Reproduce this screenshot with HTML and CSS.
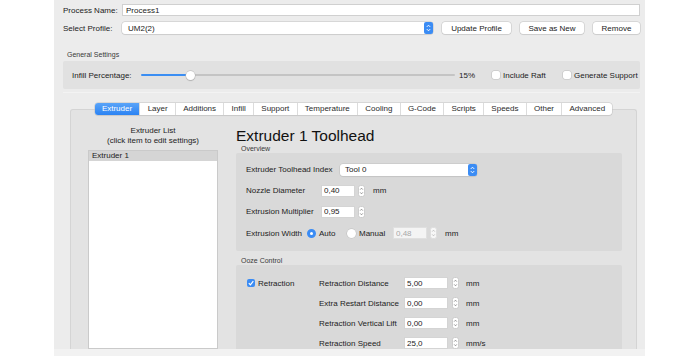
FILE: index.html
```html
<!DOCTYPE html>
<html>
<head>
  <meta charset="utf-8">
  <title>Process Settings</title>
  <link rel="stylesheet" href="styles.css">
</head>

<body>
  <div class="window">
    <div class="form-row name-row">
      <span class="row-label">Process Name:</span>
      <input class="text-input" type="text" value="Process1">
    </div>
    <div class="form-row profile-row">
      <span class="row-label">Select Profile:</span>
      <div class="select profile-select">
        <span>UM2(2)</span>
        <svg class="select-arrows" viewBox="0 0 9 12"><rect width="9" height="12" rx="2" fill="#3b8cf4"/><path d="M2.8 4.9 L4.5 3.2 L6.2 4.9 M2.8 7.1 L4.5 8.8 L6.2 7.1" stroke="#fff" stroke-width="1" fill="none"/></svg>
      </div>
      <button class="btn btn-update">Update Profile</button>
      <button class="btn btn-save">Save as New</button>
      <button class="btn btn-remove">Remove</button>
    </div>

    <div class="group-caption general-caption">General Settings</div>
    <div class="general-box">
      <span class="infill-label">Infill Percentage:</span>
      <div class="slider">
        <div class="slider-track"></div>
        <div class="slider-thumb"></div>
      </div>
      <span class="infill-value">15%</span>
      <span class="check-option raft-option"><span class="checkbox"></span>Include Raft</span>
      <span class="check-option"><span class="checkbox"></span>Generate Support</span>
    </div>
    <div class="section-rule"></div>

    <div class="tabs-area">
      <div class="tabs">
        <span class="tab active">Extruder</span>
        <span class="tab">Layer</span>
        <span class="tab">Additions</span>
        <span class="tab">Infill</span>
        <span class="tab">Support</span>
        <span class="tab">Temperature</span>
        <span class="tab">Cooling</span>
        <span class="tab">G-Code</span>
        <span class="tab">Scripts</span>
        <span class="tab">Speeds</span>
        <span class="tab">Other</span>
        <span class="tab">Advanced</span>
      </div>

      <div class="tab-panel">
        <div class="list-column">
          <div class="list-heading">Extruder List<br>(click item to edit settings)</div>
          <div class="extruder-list">
            <div class="list-item">Extruder 1</div>
          </div>
        </div>

        <div class="settings-column">
          <div class="toolhead-title">Extruder 1 Toolhead</div>

          <div class="group-caption box-caption">Overview</div>
          <div class="settings-box overview-box">
            <div class="ov-row">
              <span class="ov-label label-index">Extruder Toolhead Index</span>
              <div class="select tool-select">
                <span>Tool 0</span>
                <svg class="select-arrows" viewBox="0 0 9 12"><rect width="9" height="12" rx="2" fill="#3b8cf4"/><path d="M2.8 4.9 L4.5 3.2 L6.2 4.9 M2.8 7.1 L4.5 8.8 L6.2 7.1" stroke="#fff" stroke-width="1" fill="none"/></svg>
              </div>
            </div>
            <div class="ov-row">
              <span class="ov-label">Nozzle Diameter</span>
              <input class="num-input" type="text" value="0,40">
              <svg class="stepper" viewBox="0 0 7 12"><rect x="0.5" y="0.5" width="6" height="11" rx="2" fill="#fff" stroke="#cdcdcd"/><path d="M2.2 4.6 L3.5 3.2 L4.8 4.6 M2.2 7.4 L3.5 8.8 L4.8 7.4" fill="none" stroke="#7a7a7a" stroke-width="0.8"/></svg>
              <span class="unit">mm</span>
            </div>
            <div class="ov-row">
              <span class="ov-label">Extrusion Multiplier</span>
              <input class="num-input" type="text" value="0,95">
              <svg class="stepper" viewBox="0 0 7 12"><rect x="0.5" y="0.5" width="6" height="11" rx="2" fill="#fff" stroke="#cdcdcd"/><path d="M2.2 4.6 L3.5 3.2 L4.8 4.6 M2.2 7.4 L3.5 8.8 L4.8 7.4" fill="none" stroke="#7a7a7a" stroke-width="0.8"/></svg>
            </div>
            <div class="ov-row last-row">
              <span class="ov-label label-width">Extrusion Width</span>
              <span class="radio-option auto-option"><span class="radio checked"></span>Auto</span>
              <span class="radio-option manual-option"><span class="radio"></span>Manual</span>
              <input class="num-input disabled" type="text" value="0,48" disabled>
              <svg class="stepper" viewBox="0 0 7 12"><rect x="0.5" y="0.5" width="6" height="11" rx="2" fill="#f7f7f7" stroke="#dedede"/><path d="M2.2 4.6 L3.5 3.2 L4.8 4.6 M2.2 7.4 L3.5 8.8 L4.8 7.4" fill="none" stroke="#b5b5b5" stroke-width="0.8"/></svg>
              <span class="unit">mm</span>
            </div>
          </div>

          <div class="group-caption box-caption ooze-caption">Ooze Control</div>
          <div class="settings-box ooze-box">
            <span class="check-option"><span class="checkbox checked"><svg viewBox="0 0 8 8"><path d="M1.8 4.2 L3.4 5.8 L6.3 2.2" fill="none" stroke="#fff" stroke-width="1.2"/></svg></span>Retraction</span>
            <span class="ooze-label">Retraction Distance</span>
            <input class="num-input ooze-input" type="text" value="5,00">
            <svg class="stepper" viewBox="0 0 7 12"><rect x="0.5" y="0.5" width="6" height="11" rx="2" fill="#fff" stroke="#cdcdcd"/><path d="M2.2 4.6 L3.5 3.2 L4.8 4.6 M2.2 7.4 L3.5 8.8 L4.8 7.4" fill="none" stroke="#7a7a7a" stroke-width="0.8"/></svg>
            <span class="unit">mm</span>

            <span></span>
            <span class="ooze-label">Extra Restart Distance</span>
            <input class="num-input ooze-input" type="text" value="0,00">
            <svg class="stepper" viewBox="0 0 7 12"><rect x="0.5" y="0.5" width="6" height="11" rx="2" fill="#fff" stroke="#cdcdcd"/><path d="M2.2 4.6 L3.5 3.2 L4.8 4.6 M2.2 7.4 L3.5 8.8 L4.8 7.4" fill="none" stroke="#7a7a7a" stroke-width="0.8"/></svg>
            <span class="unit">mm</span>

            <span></span>
            <span class="ooze-label">Retraction Vertical Lift</span>
            <input class="num-input ooze-input" type="text" value="0,00">
            <svg class="stepper" viewBox="0 0 7 12"><rect x="0.5" y="0.5" width="6" height="11" rx="2" fill="#fff" stroke="#cdcdcd"/><path d="M2.2 4.6 L3.5 3.2 L4.8 4.6 M2.2 7.4 L3.5 8.8 L4.8 7.4" fill="none" stroke="#7a7a7a" stroke-width="0.8"/></svg>
            <span class="unit">mm</span>

            <span></span>
            <span class="ooze-label">Retraction Speed</span>
            <input class="num-input ooze-input" type="text" value="25,0">
            <svg class="stepper" viewBox="0 0 7 12"><rect x="0.5" y="0.5" width="6" height="11" rx="2" fill="#fff" stroke="#cdcdcd"/><path d="M2.2 4.6 L3.5 3.2 L4.8 4.6 M2.2 7.4 L3.5 8.8 L4.8 7.4" fill="none" stroke="#7a7a7a" stroke-width="0.8"/></svg>
            <span class="unit">mm/s</span>
          </div>
        </div>
      </div>
    </div>

    <div class="status-strip"></div>
  </div>
</body>
</html>
```

FILE: styles.css
```css
* {
    box-sizing: border-box;
}

body {
    margin: 0;
    background-color: #fff;
}

.window {
    margin-left: 54px;
    width: 591px;
    height: 356px;
    background-color: #ececec;
    display: flex;
    flex-direction: column;
    overflow: hidden;
    font-family: "Liberation Sans", Arial, sans-serif;
    font-size: 8px;
    color: #222;
}

input,
button {
    font: inherit;
    color: inherit;
}

.form-row {
    display: flex;
    align-items: center;
    height: 12px;
    padding: 0 5px 0 9px;
    flex: none;
}

.name-row {
    margin-top: 4px;
}

.profile-row {
    margin-top: 6px;
}

.row-label {
    width: 59px;
    flex: none;
}

.text-input {
    flex: 1;
    height: 12px;
    border: 1px solid #d0d0d0;
    background-color: #fff;
    padding: 0 3px;
    outline: none;
}

.select {
    height: 12px;
    background-color: #fff;
    border-radius: 3px;
    box-shadow: 0 0 0 0.5px #c2c2c2, 0 1px 1px rgba(0, 0, 0, 0.08);
    display: flex;
    align-items: center;
    justify-content: space-between;
}

.select-arrows {
    width: 9px;
    height: 12px;
    display: block;
}

.profile-select {
    flex: 1;
    padding-left: 6px;
}

.btn {
    margin-left: 9px;
    height: 12px;
    background-color: #fff;
    border: none;
    border-radius: 3px;
    box-shadow: 0 0 0 0.5px #c2c2c2, 0 1px 1px rgba(0, 0, 0, 0.08);
    padding: 0;
    flex: none;
}

.btn-update {
    width: 69px;
}

.btn-save {
    width: 64px;
}

.btn-remove {
    width: 47px;
}

.group-caption {
    font-size: 7px;
    line-height: 8px;
    color: #3a3a3a;
    flex: none;
}

.general-caption {
    margin: 17px 0 2px 13px;
}

.general-box {
    margin: 0 5px 0 9px;
    height: 28px;
    flex: none;
    background-color: #e1e1e1;
    border-radius: 2px;
    display: flex;
    align-items: center;
    padding-left: 9px;
}

.section-rule {
    height: 1px;
    margin: 3px 5px 0 9px;
    background-color: #f3f3f3;
    flex: none;
}

.infill-label {
    width: 69px;
}

.slider {
    width: 314px;
    height: 10px;
    position: relative;
    display: flex;
    align-items: center;
}

.slider-track {
    width: 100%;
    height: 2px;
    border-radius: 1px;
    background: linear-gradient(to right, #3b8ef3 0, #3b8ef3 49px, #c4c4c4 49px);
}

.slider-thumb {
    position: absolute;
    left: 45px;
    top: 1px;
    width: 9px;
    height: 9px;
    border-radius: 50%;
    background-color: #fff;
    box-shadow: 0 0 0 0.5px #b5b5b5, 0 1px 1px rgba(0, 0, 0, 0.2);
}

.infill-value {
    margin-left: 4px;
    width: 33px;
}

.check-option {
    display: flex;
    align-items: center;
}

.raft-option {
    width: 71px;
}

.checkbox {
    width: 8px;
    height: 8px;
    margin-right: 3px;
    border-radius: 2px;
    background-color: #fff;
    box-shadow: 0 0 0 0.5px #bdbdbd;
    flex: none;
}

.checkbox.checked {
    background-color: #3b8cf4;
    box-shadow: none;
}

.checkbox svg {
    display: block;
    width: 8px;
    height: 8px;
}

.tabs-area {
    flex: 1;
    min-height: 0;
    margin: 10px 8px 0 16px;
    display: flex;
    flex-direction: column;
}

.tabs {
    align-self: center;
    display: flex;
    height: 12px;
    background-color: #fff;
    border-radius: 3px;
    box-shadow: 0 0 0 0.5px #c2c2c2, 0 1px 1px rgba(0, 0, 0, 0.08);
    margin-bottom: -6px;
    position: relative;
    z-index: 1;
    flex: none;
}

.tab {
    padding: 0 7.25px;
    line-height: 12px;
    border-left: 1px solid #dcdcdc;
    color: #2a2a2a;
}

.tab:first-child {
    border-left: none;
}

.tab.active {
    background: linear-gradient(#5aa4f8, #2b83f3);
    color: #fff;
    border-radius: 3px 0 0 3px;
}

.tab-panel {
    flex: 1;
    min-height: 0;
    background-color: #e3e3e3;
    border: 1px solid #d4d4d4;
    border-bottom: none;
    border-radius: 3px 3px 0 0;
    display: flex;
    padding: 16px 14px 0 17px;
}

.list-column {
    width: 130px;
    margin-right: 18px;
    display: flex;
    flex-direction: column;
}

.list-heading {
    text-align: center;
    line-height: 10px;
}

.extruder-list {
    flex: 1;
    margin-top: 4px;
    background-color: #fff;
    border: 1px solid #cacaca;
}

.list-item {
    height: 10px;
    line-height: 10px;
    padding-left: 3px;
    background-color: #d5d5d5;
}

.settings-column {
    flex: 1;
    display: flex;
    flex-direction: column;
}

.toolhead-title {
    font-size: 15.5px;
    line-height: 18px;
    margin-top: 1px;
    color: #111;
}

.box-caption {
    margin-left: 5px;
}

.settings-box {
    background-color: #d9d9d9;
    border-radius: 2px;
}

.overview-box {
    height: 98px;
    flex: none;
    padding: 6px 0 0 10px;
}

.ov-row {
    display: flex;
    align-items: center;
    height: 21px;
}

.ov-row.last-row {
    height: 22px;
}

.ov-label {
    width: 75px;
    flex: none;
}

.ov-label.label-index {
    width: 94px;
}

.ov-label.label-width {
    width: 61px;
}

.tool-select {
    width: 137px;
    padding-left: 5px;
}

.num-input {
    width: 34px;
    height: 12px;
    border: 1px solid #d4d4d4;
    background-color: #fff;
    padding: 0 2px;
    outline: none;
    flex: none;
}

.num-input.disabled {
    color: #a8a8a8;
    background-color: #f4f4f4;
    border-color: #e0e0e0;
}

.stepper {
    width: 7px;
    height: 12px;
    margin-left: 3px;
    display: block;
    flex: none;
}

.unit {
    margin-left: 8px;
}

.radio-option {
    display: flex;
    align-items: center;
}

.auto-option {
    width: 40px;
}

.manual-option {
    width: 46px;
}

.radio {
    width: 9px;
    height: 9px;
    border-radius: 50%;
    background-color: #fff;
    box-shadow: 0 0 0 0.5px #bdbdbd;
    margin-right: 3px;
    flex: none;
}

.radio.checked {
    border: 3px solid #3b8cf4;
    background-color: #fff;
    box-shadow: none;
}

.ooze-caption {
    margin-top: 6px;
}

.ooze-box {
    flex: 1;
    padding: 8px 0 0 11px;
    display: grid;
    grid-template-columns: 72px 85px 44px 11px auto;
    grid-auto-rows: 20px;
    align-items: center;
    align-content: start;
}

.ooze-input {
    width: 44px;
}

.ooze-box .stepper {
    margin-left: 4px;
}

.ooze-box .unit {
    margin-left: 7px;
}

.status-strip {
    height: 7px;
    flex: none;
    background-color: #f2f2f2;
}
```
